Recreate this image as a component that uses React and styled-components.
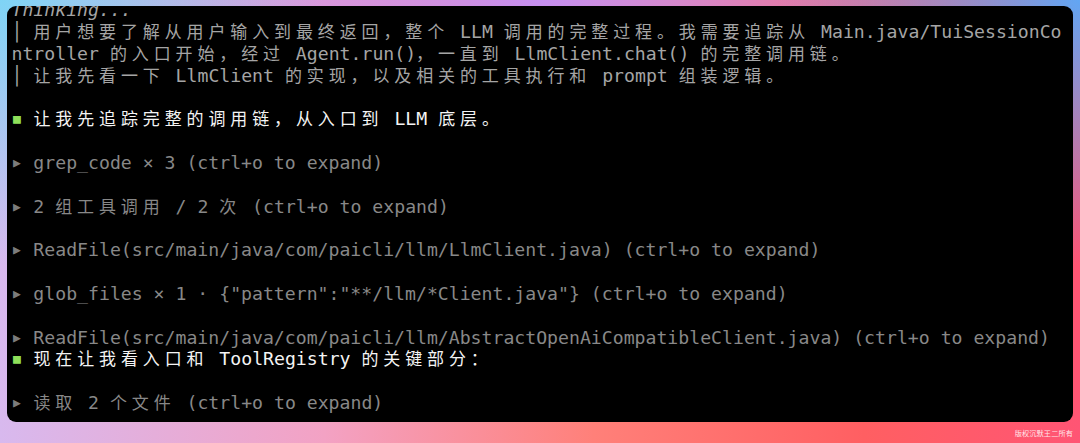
import React from "react";
import styled, { createGlobalStyle } from "styled-components";

const GlobalStyle = createGlobalStyle`
  html, body {
    margin: 0;
    padding: 0;
  }
  body {
    width: 1080px;
    height: 443px;
    overflow: hidden;
  }
`;

const Page = styled.div`
  width: 1080px;
  height: 443px;
  box-sizing: border-box;
  padding: 6px 7px 0 7px;
  display: flex;
  flex-direction: column;
  background:
    radial-gradient(ellipse 30% 60% at 0% 0%, #7fd4f5 0%, rgba(127, 212, 245, 0) 100%),
    radial-gradient(ellipse 28% 60% at 100% 0%, #62a6f3 0%, rgba(98, 166, 243, 0) 100%),
    radial-gradient(ellipse 45% 50% at 50% 0%, #c690f1 0%, rgba(198, 144, 241, 0) 100%),
    linear-gradient(to right, #d8b9ee 0%, #f3a2c4 30%, #ff8079 55%, #ff5f62 80%, #ff5574 100%);
`;

const Terminal = styled.div`
  width: 1066px;
  height: 416px;
  flex: none;
  background: #000;
  border-radius: 9px;
  overflow: hidden;
  padding-left: 4.5px;
  box-sizing: border-box;
  font-family: "DejaVu Sans Mono", "Noto Sans CJK SC", monospace;
  font-size: 18.17px;
`;

const Lines = styled.div`
  margin-top: -6.9px;
`;

const palette = {
  thinking: "#a5a5a5",
  tool: "#888888",
  say: "#f4f4f4",
};

const Row = styled.div`
  height: 21.83px;
  line-height: 21.83px;
  white-space: pre;
  color: ${(p) => palette[p.$kind] || "#a5a5a5"};
  font-style: ${(p) => (p.$italic ? "italic" : "normal")};
`;

const Wide = styled.span`
  font-family: "Noto Sans CJK SC", sans-serif;
  font-size: 17px;
  line-height: 1;
  letter-spacing: 4.88px;
`;

const Marker = styled.span`
  display: inline-block;
  width: 10.94px;
  text-align: center;
  line-height: 1;
  vertical-align: 2px;
  font-size: ${(p) => p.$size}px;
  color: ${(p) => p.$color};
`;

const Footer = styled.div`
  flex: 1;
  display: flex;
  justify-content: flex-end;
  align-items: center;
`;

const Watermark = styled.span`
  font-family: "Noto Sans CJK SC", sans-serif;
  font-size: 7.2px;
  color: rgba(255, 255, 255, 0.88);
  letter-spacing: 0.1px;
`;

const CJK = /([\u2E80-\u9FFF\u3000-\u303F\uFF00-\uFFEF]+)/;

function Term({ text }) {
  return text
    .split(CJK)
    .map((part, i) => (i % 2 === 1 ? <Wide key={i}>{part}</Wide> : part));
}

const marks = {
  say: { glyph: "■", color: "#8fe05a", size: 13 },
  tool: { glyph: "▶", color: "#7c7c7c", size: 13 },
};

const rows = [
  { kind: "thinking", italic: true, text: "Thinking..." },
  { kind: "thinking", text: "│ 用户想要了解从用户输入到最终返回，整个 LLM 调用的完整过程。我需要追踪从 Main.java/TuiSessionCo" },
  { kind: "thinking", text: "ntroller 的入口开始，经过 Agent.run()，一直到 LlmClient.chat() 的完整调用链。" },
  { kind: "thinking", text: "│ 让我先看一下 LlmClient 的实现，以及相关的工具执行和 prompt 组装逻辑。" },
  { text: "" },
  { kind: "say", mark: true, text: " 让我先追踪完整的调用链，从入口到 LLM 底层。" },
  { text: "" },
  { kind: "tool", mark: true, text: " grep_code × 3 (ctrl+o to expand)" },
  { text: "" },
  { kind: "tool", mark: true, text: " 2 组工具调用 / 2 次 (ctrl+o to expand)" },
  { text: "" },
  { kind: "tool", mark: true, text: " ReadFile(src/main/java/com/paicli/llm/LlmClient.java) (ctrl+o to expand)" },
  { text: "" },
  { kind: "tool", mark: true, text: ' glob_files × 1 · {"pattern":"**/llm/*Client.java"} (ctrl+o to expand)' },
  { text: "" },
  { kind: "tool", mark: true, text: " ReadFile(src/main/java/com/paicli/llm/AbstractOpenAiCompatibleClient.java) (ctrl+o to expand)" },
  { kind: "say", mark: true, text: " 现在让我看入口和 ToolRegistry 的关键部分：" },
  { text: "" },
  { kind: "tool", mark: true, text: " 读取 2 个文件 (ctrl+o to expand)" },
];

export default function App() {
  return (
    <>
      <GlobalStyle />
      <Page>
        <Terminal>
          <Lines>
            {rows.map((r, i) => {
              const m = r.mark && marks[r.kind];
              return (
                <Row key={i} $kind={r.kind} $italic={r.italic}>
                  {m && (
                    <Marker $color={m.color} $size={m.size}>
                      {m.glyph}
                    </Marker>
                  )}
                  <Term text={r.text || " "} />
                </Row>
              );
            })}
          </Lines>
        </Terminal>
        <Footer>
          <Watermark>版权沉默王二所有</Watermark>
        </Footer>
      </Page>
    </>
  );
}
